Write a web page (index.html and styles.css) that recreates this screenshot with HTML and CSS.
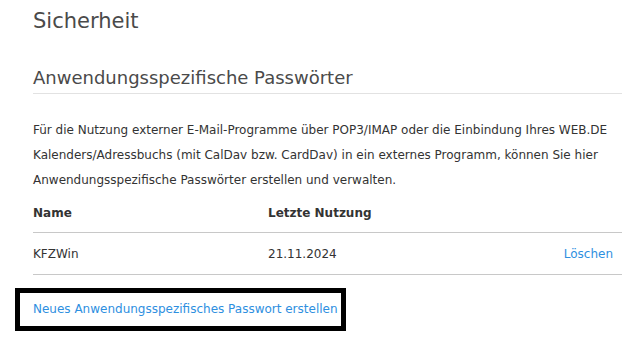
FILE: index.html
```html
<!DOCTYPE html>
<html lang="de">
<head>
    <meta charset="UTF-8">
    <meta name="viewport" content="width=device-width, initial-scale=1.0">
    <title>Sicherheit</title>
    <link rel="stylesheet" href="styles.css">
</head>
<body>
    <div class="page">
        <h1>Sicherheit</h1>
        <div class="section">
            <h2>Anwendungsspezifische Passwörter</h2>
            <p class="intro">Für die Nutzung externer E-Mail-Programme über POP3/IMAP oder die Einbindung Ihres WEB.DE Kalenders/Adressbuchs (mit CalDav bzw. CardDav) in ein externes Programm, können Sie hier Anwendungsspezifische Passwörter erstellen und verwalten.</p>
            <table class="pw-table">
                <thead>
                    <tr>
                        <th class="col-name">Name</th>
                        <th class="col-date">Letzte Nutzung</th>
                        <th class="col-action"></th>
                    </tr>
                </thead>
                <tbody>
                    <tr>
                        <td class="col-name">KFZWin</td>
                        <td class="col-date">21.11.2024</td>
                        <td class="col-action"><a href="#">Löschen</a></td>
                    </tr>
                </tbody>
            </table>
            <div class="new-pw">
                <a href="#">Neues Anwendungsspezifisches Passwort erstellen</a>
            </div>
        </div>
    </div>
</body>
</html>
```

FILE: styles.css
```css
body {
    margin: 0;
    font-family: 'DejaVu Sans', Verdana, sans-serif;
    font-size: 12px;
    color: #333;
    background-color: #fff;
}
a {
    color: #2e8fdf;
    text-decoration: none;
}
.page {
    padding: 6px 15px 0 15px;
}
h1 {
    margin: 0 0 0 18px;
    font-size: 21px;
    font-weight: normal;
    color: #4a4a4a;
    line-height: 30px;
}
.section {
    margin-top: 31px;
}
h2 {
    margin: 0 0 0 18px;
    width: 589px;
    font-size: 18px;
    font-weight: normal;
    color: #4a4a4a;
    line-height: 22px;
    padding-bottom: 4px;
    border-bottom: 1px solid #e2e2e2;
}
.intro {
    margin: 24px 0 0 18px;
    width: 600px;
    line-height: 25px;
}
.pw-table {
    margin: 0 0 0 18px;
    width: 589px;
    border-collapse: collapse;
}
.pw-table th {
    text-align: left;
    font-weight: bold;
    height: 39px;
    padding: 0;
    border-bottom: 1px solid #c8c8c8;
}
.pw-table td {
    height: 41px;
    padding: 0;
    border-bottom: 1px solid #c8c8c8;
}
.col-name {
    width: 235px;
}
.col-date {
    width: 180px;
}
.pw-table td.col-action {
    text-align: right;
    padding-right: 9px;
}
.new-pw {
    display: inline-block;
    margin-top: 13px;
    border: 5px solid #000;
    padding: 8px 3px 8px 13px;
    line-height: 17px;
}
```
